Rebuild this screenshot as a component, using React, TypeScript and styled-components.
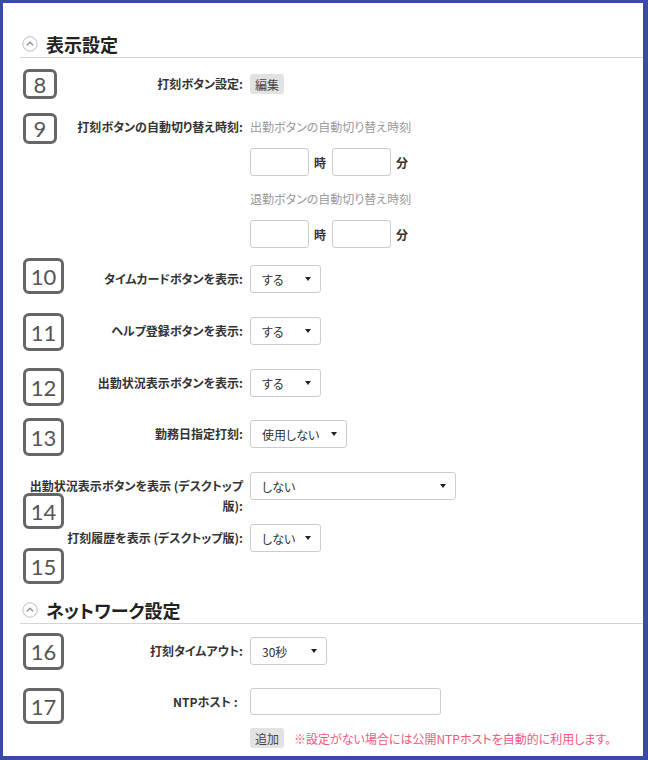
import styled, { createGlobalStyle } from 'styled-components';

const GlobalStyle = createGlobalStyle`
    html, body {
        margin: 0;
        padding: 0;
        background: #fff;
        font-family: "Noto Sans CJK JP", "Noto Sans", sans-serif;
        font-feature-settings: "palt";
        color: #333;
    }
`

const Frame = styled.div`
    box-sizing: border-box;
    width: 648px;
    height: 760px;
    border-style: solid;
    border-color: #3b4aa8;
    border-width: 3px 5px 4px 3px;
    padding: 28px 0 0 17px;
    overflow: hidden;
`

const SectionHeader = styled.header<{ $mt?: number }>`
    display: flex;
    align-items: center;
    gap: 8px;
    height: 26px;
    margin-top: ${p => p.$mt ?? 0}px;
    padding-left: 2px;
    border-bottom: 1px solid #d4d4d4;
    > h2 {
        margin: 0;
        font-size: 18px;
        font-weight: 700;
        color: #222;
        line-height: 24px;
    }
`

const Row = styled.div<{ $mt: number; $fixed?: boolean }>`
    position: relative;
    display: grid;
    grid-template-columns: 223px 1fr;
    grid-template-rows: ${p => (p.$fixed ? '28px' : 'auto')};
    column-gap: 7px;
    align-items: start;
    margin-top: ${p => p.$mt}px;
`

const Label = styled.div`
    text-align: right;
    font-size: 12px;
    font-weight: 700;
    line-height: 20px;
    padding-top: 4px;
    white-space: pre;
    color: #333;
`

const Control = styled.div`
    display: flex;
    align-items: center;
    min-height: 28px;
`

const Stack = styled.div`
    display: flex;
    flex-direction: column;
`

const Hint = styled.div<{ $mt?: number }>`
    font-size: 12px;
    line-height: 28px;
    color: #999;
    margin-top: ${p => p.$mt ?? 0}px;
`

const TimeLine = styled.div`
    display: flex;
    align-items: center;
    gap: 5px;
    margin-top: 7px;
    font-size: 12px;
    font-weight: 700;
    color: #333;
    > span { margin-right: 1px; }
`

const TextBox = styled.div<{ $w: number; $h?: number }>`
    box-sizing: border-box;
    width: ${p => p.$w}px;
    height: ${p => p.$h ?? 28}px;
    border: 1px solid #ccc;
    border-radius: 3px;
    background: #fff;
`

const SelectBox = styled.div<{ $w: number }>`
    box-sizing: border-box;
    display: flex;
    align-items: center;
    justify-content: space-between;
    width: ${p => p.$w}px;
    height: 28px;
    padding: 0 9px 0 11px;
    border: 1px solid #ccc;
    border-radius: 3px;
    background: #fff;
    font-size: 12px;
    color: #333;
    &::after {
        content: "";
        border-left: 3.5px solid transparent;
        border-right: 3.5px solid transparent;
        border-top: 4px solid #222;
    }
`

const GreyButton = styled.span`
    display: inline-flex;
    align-items: center;
    height: 20px;
    padding: 0 5px;
    border-radius: 3px;
    background: #e2e2e2;
    font-size: 12px;
    color: #444;
`

const NoteLine = styled.div`
    display: flex;
    align-items: center;
    gap: 10px;
    margin-top: 13px;
    > p {
        margin: 0;
        font-size: 12px;
        color: #f5577a;
    }
`

const Badge = styled.div<{ $top: number; $h: number; $wide?: boolean }>`
    position: absolute;
    left: 3px;
    top: ${p => p.$top}px;
    box-sizing: border-box;
    width: ${p => (p.$wide ? 41 : 34)}px;
    height: ${p => p.$h}px;
    display: flex;
    align-items: center;
    justify-content: center;
    border: 3px solid #666;
    border-radius: 6px;
    background: #fff;
    font-family: Lato, "Open Sans", sans-serif;
    font-size: 22px;
    color: #555;
`

function Toggle() {
    return (
        <svg width="16" height="16" viewBox="0 0 16 16">
            <circle cx="8" cy="8" r="7.2" fill="none" stroke="#bdbdbd" strokeWidth="1" />
            <path d="M4.8 9.4 L8 6.2 L11.2 9.4" fill="none" stroke="#8a8a8a" strokeWidth="1.3" />
        </svg>
    )
}

function TimeInputs() {
    return (
        <TimeLine>
            <TextBox $w={59} />
            <span>時</span>
            <TextBox $w={59} />
            <span>分</span>
        </TimeLine>
    )
}

export default function App() {
    return (
        <>
            <GlobalStyle />
            <Frame>
                <SectionHeader>
                    <Toggle />
                    <h2>表示設定</h2>
                </SectionHeader>

                <Row $mt={12}>
                    <Badge $top={-1} $h={30}>8</Badge>
                    <Label>打刻ボタン設定:</Label>
                    <Control><GreyButton>編集</GreyButton></Control>
                </Row>

                <Row $mt={15}>
                    <Badge $top={0} $h={31}>9</Badge>
                    <Label>打刻ボタンの自動切り替え時刻:</Label>
                    <Stack>
                        <Hint>出勤ボタンの自動切り替え時刻</Hint>
                        <TimeInputs />
                        <Hint $mt={9}>退勤ボタンの自動切り替え時刻</Hint>
                        <TimeInputs />
                    </Stack>
                </Row>

                <Row $mt={17}>
                    <Badge $top={-7} $h={36} $wide>10</Badge>
                    <Label>タイムカードボタンを表示:</Label>
                    <Control><SelectBox $w={71}>する</SelectBox></Control>
                </Row>

                <Row $mt={24}>
                    <Badge $top={-4} $h={38} $wide>11</Badge>
                    <Label>ヘルプ登録ボタンを表示:</Label>
                    <Control><SelectBox $w={71}>する</SelectBox></Control>
                </Row>

                <Row $mt={24}>
                    <Badge $top={-1} $h={38} $wide>12</Badge>
                    <Label>出勤状況表示ボタンを表示:</Label>
                    <Control><SelectBox $w={71}>する</SelectBox></Control>
                </Row>

                <Row $mt={23}>
                    <Badge $top={-2} $h={38} $wide>13</Badge>
                    <Label>勤務日指定打刻:</Label>
                    <Control><SelectBox $w={97}>使用しない</SelectBox></Control>
                </Row>

                <Row $mt={24} $fixed>
                    <Badge $top={21} $h={36} $wide>14</Badge>
                    <Label>出勤状況表示ボタンを表示 (デスクトップ<br />版):</Label>
                    <Control><SelectBox $w={206}>しない</SelectBox></Control>
                </Row>

                <Row $mt={24}>
                    <Badge $top={24} $h={36} $wide>15</Badge>
                    <Label>打刻履歴を表示 (デスクトップ版):</Label>
                    <Control><SelectBox $w={71}>しない</SelectBox></Control>
                </Row>

                <SectionHeader $mt={45}>
                    <Toggle />
                    <h2>ネットワーク設定</h2>
                </SectionHeader>

                <Row $mt={13}>
                    <Badge $top={-4} $h={37} $wide>16</Badge>
                    <Label>打刻タイムアウト:</Label>
                    <Control><SelectBox $w={77}>30秒</SelectBox></Control>
                </Row>

                <Row $mt={23}>
                    <Badge $top={0} $h={36} $wide>17</Badge>
                    <Label>{'NTPホスト :  '}</Label>
                    <Stack>
                        <TextBox $w={191} $h={27} />
                        <NoteLine>
                            <GreyButton>追加</GreyButton>
                            <p>※設定がない場合には公開NTPホストを自動的に利用します。</p>
                        </NoteLine>
                    </Stack>
                </Row>
            </Frame>
        </>
    )
}
